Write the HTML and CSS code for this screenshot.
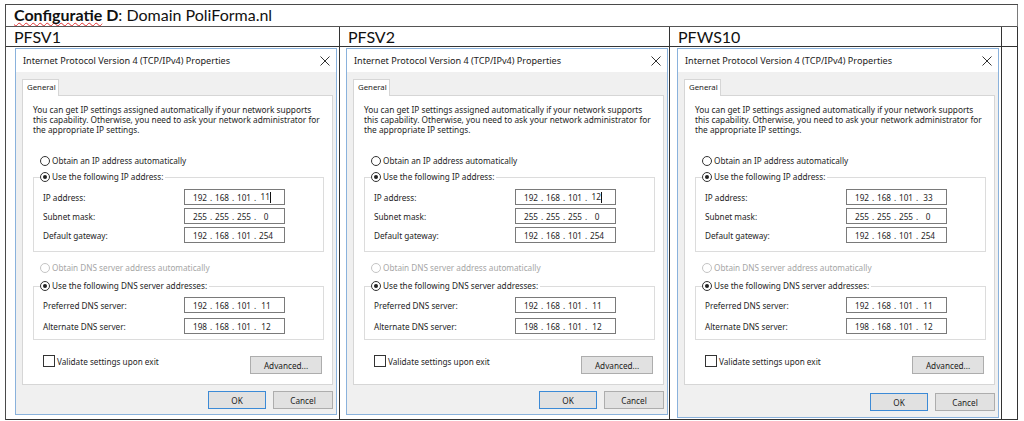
FILE: index.html
```html
<!DOCTYPE html>
<html>
<head>
<meta charset="utf-8">
<link rel="stylesheet" href="styles.css">
<title>Configuratie D</title>
</head>
<body>
<div class="sheet">
  <div class="cell head"><span class="spell"><b>Configuratie</b></span><b> D</b>: Domain PoliForma.nl</div>

  <div class="cell name">PFSV1</div>
  <div class="cell name">PFSV2</div>
  <div class="cell name">PFWS10</div>
  <div class="cell name"></div>

  <div class="cell shot shot1">
    <div class="dialog">
      <div class="titlebar"><span>Internet Protocol Version 4 (TCP/IPv4) Properties</span><svg class="close" width="10" height="10" viewBox="0 0 10 10"><path d="M0.5 0.5L9.5 9.5M9.5 0.5L0.5 9.5" stroke="#333" stroke-width="1" fill="none"/></svg></div>
      <div class="body">
        <div class="tab">General</div>
        <div class="panel">
          <p class="intro">You can get IP settings assigned automatically if your network supports this capability. Otherwise, you need to ask your network administrator for the appropriate IP settings.</p>
          <div class="radio-row"><span class="radio"></span>Obtain an IP address automatically</div>
          <fieldset class="group g1">
            <legend><span class="radio on"></span>Use the following IP address:</legend>
            <div class="field"><span class="lbl">IP address:</span><span class="ip"><i>192</i><b>.</b><i>168</i><b>.</b><i>101</i><b>.</b><i>11<span class="caret"></span></i></span></div>
            <div class="field"><span class="lbl">Subnet mask:</span><span class="ip"><i>255</i><b>.</b><i>255</i><b>.</b><i>255</i><b>.</b><i>0</i></span></div>
            <div class="field"><span class="lbl">Default gateway:</span><span class="ip"><i>192</i><b>.</b><i>168</i><b>.</b><i>101</i><b>.</b><i>254</i></span></div>
          </fieldset>
          <div class="radio-row dim dns"><span class="radio"></span>Obtain DNS server address automatically</div>
          <fieldset class="group g2">
            <legend><span class="radio on"></span>Use the following DNS server addresses:</legend>
            <div class="field"><span class="lbl">Preferred DNS server:</span><span class="ip"><i>192</i><b>.</b><i>168</i><b>.</b><i>101</i><b>.</b><i>11</i></span></div>
            <div class="field"><span class="lbl">Alternate DNS server:</span><span class="ip"><i>198</i><b>.</b><i>168</i><b>.</b><i>101</i><b>.</b><i>12</i></span></div>
          </fieldset>
          <div class="bottom-row"><span class="check-row"><span class="check"></span>Validate settings upon exit</span><span class="btn adv">Advanced...</span></div>
        </div>
        <div class="buttons"><span class="btn ok">OK</span><span class="btn">Cancel</span></div>
      </div>
    </div>
  </div>

  <div class="cell shot shot2">
    <div class="dialog">
      <div class="titlebar"><span>Internet Protocol Version 4 (TCP/IPv4) Properties</span><svg class="close" width="10" height="10" viewBox="0 0 10 10"><path d="M0.5 0.5L9.5 9.5M9.5 0.5L0.5 9.5" stroke="#333" stroke-width="1" fill="none"/></svg></div>
      <div class="body">
        <div class="tab">General</div>
        <div class="panel">
          <p class="intro">You can get IP settings assigned automatically if your network supports this capability. Otherwise, you need to ask your network administrator for the appropriate IP settings.</p>
          <div class="radio-row"><span class="radio"></span>Obtain an IP address automatically</div>
          <fieldset class="group g1">
            <legend><span class="radio on"></span>Use the following IP address:</legend>
            <div class="field"><span class="lbl">IP address:</span><span class="ip"><i>192</i><b>.</b><i>168</i><b>.</b><i>101</i><b>.</b><i>12<span class="caret"></span></i></span></div>
            <div class="field"><span class="lbl">Subnet mask:</span><span class="ip"><i>255</i><b>.</b><i>255</i><b>.</b><i>255</i><b>.</b><i>0</i></span></div>
            <div class="field"><span class="lbl">Default gateway:</span><span class="ip"><i>192</i><b>.</b><i>168</i><b>.</b><i>101</i><b>.</b><i>254</i></span></div>
          </fieldset>
          <div class="radio-row dim dns"><span class="radio"></span>Obtain DNS server address automatically</div>
          <fieldset class="group g2">
            <legend><span class="radio on"></span>Use the following DNS server addresses:</legend>
            <div class="field"><span class="lbl">Preferred DNS server:</span><span class="ip"><i>192</i><b>.</b><i>168</i><b>.</b><i>101</i><b>.</b><i>11</i></span></div>
            <div class="field"><span class="lbl">Alternate DNS server:</span><span class="ip"><i>198</i><b>.</b><i>168</i><b>.</b><i>101</i><b>.</b><i>12</i></span></div>
          </fieldset>
          <div class="bottom-row"><span class="check-row"><span class="check"></span>Validate settings upon exit</span><span class="btn adv">Advanced...</span></div>
        </div>
        <div class="buttons"><span class="btn ok">OK</span><span class="btn">Cancel</span></div>
      </div>
    </div>
  </div>

  <div class="cell shot shot3">
    <div class="dialog">
      <div class="titlebar"><span>Internet Protocol Version 4 (TCP/IPv4) Properties</span><svg class="close" width="10" height="10" viewBox="0 0 10 10"><path d="M0.5 0.5L9.5 9.5M9.5 0.5L0.5 9.5" stroke="#333" stroke-width="1" fill="none"/></svg></div>
      <div class="body">
        <div class="tab">General</div>
        <div class="panel">
          <p class="intro">You can get IP settings assigned automatically if your network supports this capability. Otherwise, you need to ask your network administrator for the appropriate IP settings.</p>
          <div class="radio-row"><span class="radio"></span>Obtain an IP address automatically</div>
          <fieldset class="group g1">
            <legend><span class="radio on"></span>Use the following IP address:</legend>
            <div class="field"><span class="lbl">IP address:</span><span class="ip"><i>192</i><b>.</b><i>168</i><b>.</b><i>101</i><b>.</b><i>33</i></span></div>
            <div class="field"><span class="lbl">Subnet mask:</span><span class="ip"><i>255</i><b>.</b><i>255</i><b>.</b><i>255</i><b>.</b><i>0</i></span></div>
            <div class="field"><span class="lbl">Default gateway:</span><span class="ip"><i>192</i><b>.</b><i>168</i><b>.</b><i>101</i><b>.</b><i>254</i></span></div>
          </fieldset>
          <div class="radio-row dim dns"><span class="radio"></span>Obtain DNS server address automatically</div>
          <fieldset class="group g2">
            <legend><span class="radio on"></span>Use the following DNS server addresses:</legend>
            <div class="field"><span class="lbl">Preferred DNS server:</span><span class="ip"><i>192</i><b>.</b><i>168</i><b>.</b><i>101</i><b>.</b><i>11</i></span></div>
            <div class="field"><span class="lbl">Alternate DNS server:</span><span class="ip"><i>198</i><b>.</b><i>168</i><b>.</b><i>101</i><b>.</b><i>12</i></span></div>
          </fieldset>
          <div class="bottom-row"><span class="check-row"><span class="check"></span>Validate settings upon exit</span><span class="btn adv">Advanced...</span></div>
        </div>
        <div class="buttons"><span class="btn ok">OK</span><span class="btn">Cancel</span></div>
      </div>
    </div>
  </div>

  <div class="cell shot"></div>
</div>
</body>
</html>
```

FILE: styles.css
```css
* { box-sizing: border-box; }
html, body { margin: 0; padding: 0; background: #fff; }
body { font-family: "Noto Sans", "Open Sans", sans-serif; color: #1e1e1e; }

.sheet {
  display: grid;
  grid-template-columns: 334px 330px 332px 16px;
  grid-template-rows: 22px 20px 373px;
  width: 1013px;
  margin: 4px 0 0 5px;
  border-top: 1px solid #4a4a4a;
  border-left: 1px solid #4a4a4a;
}
.cell {
  border-right: 1px solid #333;
  border-bottom: 1px solid #333;
  overflow: hidden;
}
.head {
  grid-column: 1 / 5;
  border-right-color: #7a7a7a;
  border-bottom-color: #555;
  font-family: "Lato", "Open Sans", sans-serif;
  font-size: 16px;
  line-height: 20px;
  padding-left: 8px;
  color: #111;
}
.head b { font-weight: 700; }
.spell {
  text-decoration: underline wavy #e03030;
  text-decoration-thickness: 1px;
  text-underline-offset: 1px;
  text-decoration-skip-ink: none;
}
.name {
  font-family: "Lato", "Open Sans", sans-serif;
  font-size: 16px;
  line-height: 19px;
  padding-left: 8px;
  color: #111;
}
.shot { padding-top: 1px; }
.shot1 { padding-left: 9px; }
.shot2 { padding-left: 6px; }
.shot3 { padding-left: 7px; }

.dialog {
  width: 322px;
  height: 367px;
  border: 1px solid #8ab2dc;
  background: #f0f0f0;
  display: flex;
  flex-direction: column;
  font-size: 8.2px;
}
.shot3 .dialog { height: 370px; }
.shot3 .buttons { margin-top: 8px; }
.titlebar {
  height: 23px;
  background: #fff;
  display: flex;
  align-items: center;
  justify-content: space-between;
  padding: 0 6px 0 7px;
  font-size: 9.1px;
  color: #222;
}
.close { display: block; }
.body {
  flex: 1;
  padding: 7px 0 0 6px;
  display: flex;
  flex-direction: column;
}
.tab {
  width: 37px;
  height: 17px;
  background: #fff;
  border: 1px solid #d6d6d6;
  border-bottom: none;
  padding-left: 4px;
  line-height: 15px;
  font-size: 7.8px;
  position: relative;
  z-index: 1;
  margin-bottom: -1px;
}
.panel {
  width: 311px;
  height: 290px;
  background: #fff;
  border: 1px solid #d6d6d6;
  padding: 9px 10px 0 10px;
}
.intro {
  margin: 0;
  line-height: 10px;
  width: 292px;
  font-size: 8.3px;
}
.radio-row {
  display: flex;
  align-items: center;
  height: 12px;
  margin: 20px 0 0 7px;
  line-height: 12px;
}
.radio-row.dns { margin-top: 10px; }
.radio-row.dim { color: #a6a6a6; }
.radio {
  width: 10px;
  height: 10px;
  border: 1px solid #333;
  border-radius: 50%;
  background: #fff;
  margin-right: 2px;
  display: inline-flex;
  align-items: center;
  justify-content: center;
  flex: none;
}
.dim .radio { border-color: #c4c4c4; }
.radio.on::after {
  content: "";
  width: 4px;
  height: 4px;
  border-radius: 50%;
  background: #222;
}
.group {
  margin: 4px 0 0 0;
  width: 291px;
  border: 1px solid #dcdcdc;
  padding: 6px 0 8px 6px;
  display: flex;
  flex-direction: column;
  gap: 3px;
}
.group.g2 {
  margin-top: 6px;
  padding-top: 5px;
  padding-bottom: 5px;
  gap: 5px;
}
.group legend {
  padding: 0 2px 0 0;
  display: flex;
  align-items: center;
  height: 12px;
  line-height: 12px;
}
.field {
  display: grid;
  grid-template-columns: 144px 101px;
  align-items: center;
  height: 16px;
}
.lbl { padding-left: 3px; }
.ip {
  height: 16px;
  border: 1px solid #7a7a7a;
  background: #fff;
  display: flex;
  align-items: center;
  padding-left: 6px;
}
.ip i {
  font-style: normal;
  width: 18px;
  text-align: center;
  position: relative;
}
.ip b {
  font-weight: normal;
  width: 4px;
  text-align: center;
}
.caret {
  display: inline-block;
  width: 1px;
  height: 11px;
  background: #111;
  vertical-align: middle;
  margin-left: 0.5px;
}
.bottom-row {
  display: flex;
  justify-content: space-between;
  align-items: flex-start;
  margin-top: 15px;
}
.check-row {
  display: flex;
  align-items: center;
  height: 12px;
  margin-left: 10px;
}
.check {
  width: 12px;
  height: 12px;
  border: 1px solid #333;
  background: #fff;
  margin-right: 2px;
}
.btn {
  display: flex;
  align-items: center;
  justify-content: center;
  height: 18px;
  width: 60px;
  background: #e1e1e1;
  border: 1px solid #adadad;
  color: #222;
}
.btn.adv {
  width: 72px;
  margin-top: 1px;
}
.buttons {
  display: flex;
  justify-content: flex-end;
  gap: 7px;
  width: 311px;
  margin-top: 6px;
}
.btn.ok {
  width: 58px;
  border-color: #3c8ad6;
}
```
